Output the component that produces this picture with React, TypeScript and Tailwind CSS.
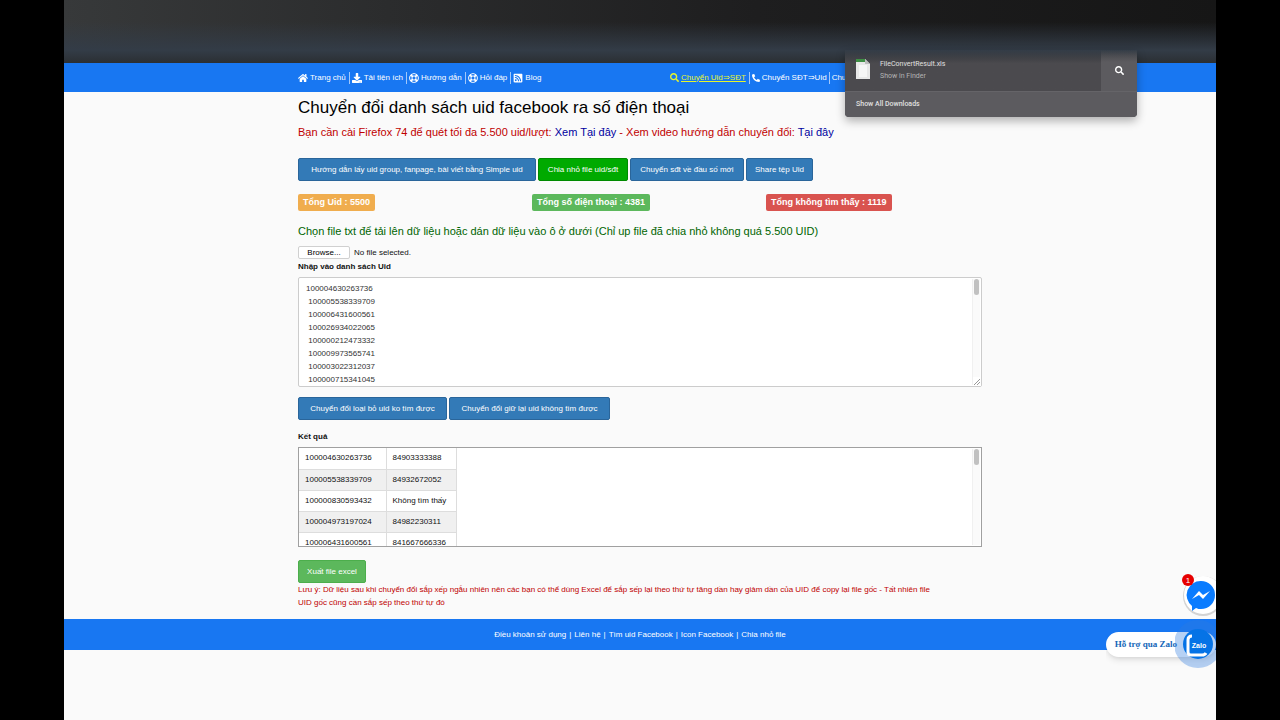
import React, { useState } from 'react';
import { FaDownload, FaHome, FaPhoneAlt, FaRegLifeRing, FaRssSquare, FaSearch } from 'react-icons/fa';
import { clsx } from 'clsx';

const UIDS = [
  '100004630263736',
  ' 100005538339709',
  ' 100006431600561',
  ' 100026934022065',
  ' 100000212473332',
  ' 100009973565741',
  ' 100003022312037',
  ' 100000715341045',
].join('\n');

const RESULTS = [
  { uid: '100004630263736', phone: '84903333388' },
  { uid: '100005538339709', phone: '84932672052' },
  { uid: '100000830593432', phone: 'Không tìm thấy' },
  { uid: '100004973197024', phone: '84982230311' },
  { uid: '100006431600561', phone: '841667666336' },
];

const NAV_LINKS = [
  { label: 'Trang chủ', icon: FaHome },
  { label: 'Tải tiện ích', icon: FaDownload },
  { label: 'Hướng dẫn', icon: FaRegLifeRing },
  { label: 'Hỏi đáp', icon: FaRegLifeRing },
  { label: 'Blog', icon: FaRssSquare },
];

const FOOTER_LINKS = ['Điều khoản sử dụng', 'Liên hệ', 'Tìm uid Facebook', 'Icon Facebook', 'Chia nhỏ file'];

const BUTTON_COLORS = {
  blue: 'bg-[#337ab7] border-[#2a659a]',
  green: 'bg-[#00aa00] border-[#008a00]',
  success: 'bg-[#5cb85c] border-[#4cae4c]',
};

interface ButtonProps {
  color?: keyof typeof BUTTON_COLORS;
  className: string;
  children: React.ReactNode;
}

const Button: React.FC<ButtonProps> = ({ color = 'blue', className, children }) => (
  <button type="button" className={clsx('h-[23px] rounded-xs border text-white whitespace-nowrap', BUTTON_COLORS[color], className)}>
    {children}
  </button>
);

const Badge: React.FC<{ className: string; children: React.ReactNode }> = ({ className, children }) => (
  <span className={clsx('block w-fit h-[17px] px-[5px] rounded-xs text-[9px] leading-[17px] font-bold text-white whitespace-nowrap', className)}>
    {children}
  </span>
);

const ScrollThumb = () => (
  <div className="absolute top-px right-px bottom-px w-2 border-l border-[#f0f0f0] bg-[#fafafa]">
    <div className="ml-px w-[5px] h-4 rounded-full bg-[#c1c1c1]"></div>
  </div>
);

const DownloadsPopup = () => (
  <div className="absolute z-20 top-[50px] right-[79px] w-[292px] rounded-b-sm overflow-hidden bg-linear-to-b from-transparent from-0% to-[#4b4a4e] to-20% text-[#e0e0e0] shadow-[0_4px_10px_rgba(0,0,0,0.3)] font-[Roboto,sans-serif] text-[7px]">
    <div className="flex h-[41px]">
      <div className="flex flex-1 gap-[10px] pl-[11px] pt-2">
        <svg viewBox="0 0 14 21" className="w-[14px] h-[21px]">
          <path d="M0 1h9l5 5v15H0z" fill="#e8e8e8" />
          <path d="M0 1h9v3H0z" fill="#3f8f45" />
          <path d="M9 1l5 5H9z" fill="#bdbdbd" />
          <path d="M3 7h8v12H3z" fill="#f6f6f6" />
        </svg>
        <div className="leading-3">
          <div>FileConvertResult.xls</div>
          <div className="text-[#b4b4b4]">Show in Finder</div>
        </div>
      </div>
      <button type="button" aria-label="Show in Finder" className="flex w-9 items-center justify-center bg-linear-to-b from-transparent to-[#5c5b5f] to-30% text-white">
        <FaSearch size={9} />
      </button>
    </div>
    <div className="h-[26px] px-[11px] bg-[#5c5b5f] border-t border-[#656468] leading-6 font-medium">Show All Downloads</div>
  </div>
);

const ChatWidgets = () => (
  <>
    <button type="button" aria-label="Messenger" className="absolute z-20 top-[574px] right-0 w-[34px] h-11 overflow-hidden">
      <svg viewBox="0 0 34 44" className="w-[34px] h-11">
        <circle cx="21" cy="22" r="20" fill="#b9b9b9" opacity="0.6" />
        <circle cx="21" cy="21" r="19" fill="#fff" />
        <path d="M19 7a14 14 0 0 1 14 14c0 8-6 14-14 14-2 0-3 0-5-1l-4 3v-5a14 14 0 0 1 9-25z" fill="#0a7cff" />
        <path d="M10 25l7-8 4 4 7-4-7 8-4-4z" fill="#fff" />
        <circle cx="6" cy="6" r="6" fill="#e60000" />
        <text x="6" y="9" textAnchor="middle" fontSize="8" fill="#fff">1</text>
      </svg>
    </button>
    <a href="#zalo" className="absolute z-20 top-[617px] right-0 flex h-[54px] items-center overflow-hidden text-[#1466b8]">
      <span className="h-[25px] pl-[9px] pr-[39px] rounded-full bg-white leading-6 text-[9px] font-bold font-[Liberation_Serif,serif] shadow-md">
        Hỗ trợ qua Zalo
      </span>
      <svg viewBox="0 0 41 54" className="-ml-[41px] w-[41px] h-[54px]">
        <circle cx="23" cy="27" r="24" fill="#2f7be0" opacity="0.35" />
        <circle cx="23" cy="27" r="15" fill="#0573e6" />
        <path d="M17 19q-4 0-4 4v12q0 3 3 3h11q3 0 4-2" fill="none" stroke="#fff" strokeWidth="3" />
        <text x="24" y="31" textAnchor="middle" fontSize="7" fontWeight="bold" fill="#fff">Zalo</text>
      </svg>
    </a>
  </>
);

const App: React.FC = () => {
  const [uids, setUids] = useState(UIDS);

  return (
    <div className="min-h-screen px-[5%] bg-black">
      <div className="relative min-h-screen overflow-hidden bg-[#fafafa] font-[Liberation_Sans,Arial,sans-serif] text-[8px] text-[#111]">
        <div className="h-[63px] bg-linear-to-r from-[#37393a] via-[#1e1e1f] via-60% to-[#161616]">
          <div className="h-full bg-linear-to-b from-transparent from-35% via-[#333c47] via-80% to-[#2b2f33]"></div>
        </div>

        <header className="bg-[#1877f2] text-white">
          <nav className="flex justify-between max-w-[684px] h-[29px] mx-auto items-center whitespace-nowrap">
            <div className="flex items-center">
              {NAV_LINKS.map(({ label, icon: Icon }, i) => (
                <a key={label} href="#" className={clsx('flex items-center gap-[2px] pr-[3px]', i > 0 && 'border-l border-white/60 pl-[2px]')}>
                  <Icon size={10} />
                  {label}
                </a>
              ))}
            </div>
            <div className="flex w-[312px] items-center">
              <a href="#" className="flex items-center gap-[2px] pr-[3px] text-[#e6f52c]">
                <FaSearch size={9} />
                <span className="underline">Chuyển Uid⇒SĐT</span>
              </a>
              <a href="#" className="flex items-center gap-[2px] border-l border-white/60 px-[2px]">
                <FaPhoneAlt size={8} />
                Chuyển SĐT⇒Uid
              </a>
              <a href="#" className="border-l border-white/60 pl-[2px]">Chu</a>
            </div>
          </nav>
        </header>

        <main className="max-w-[684px] mx-auto">
          <h1 className="pt-1 text-[17px] leading-6 text-black">Chuyển đổi danh sách uid facebook ra số điện thoại</h1>
          <p className="text-[11px] leading-6 text-[#c00000]">
            Bạn cần cài Firefox 74 để quét tối đa 5.500 uid/lượt: <a href="#" className="text-[#0000a0]">Xem Tại đây</a> - Xem video
            hướng dẫn chuyển đổi: <a href="#" className="text-[#0000a0]">Tại đây</a>
          </p>

          <div className="flex gap-[2px] pt-[14px]">
            <Button className="w-[238px]">Hướng dẫn lấy uid group, fanpage, bài viết bằng Simple uid</Button>
            <Button color="green" className="w-[90px]">Chia nhỏ file uid/sđt</Button>
            <Button className="w-[114px]">Chuyển sđt về đầu số mới</Button>
            <Button className="w-[67px]">Share tệp Uid</Button>
          </div>

          <div className="grid grid-cols-[234px_234px_auto] pt-[13px]">
            <Badge className="bg-[#f0ad4e]">Tổng Uid : 5500</Badge>
            <Badge className="bg-[#5cb85c]">Tổng số điện thoại : 4381</Badge>
            <Badge className="bg-[#d9534f]">Tổng không tìm thấy : 1119</Badge>
          </div>

          <p className="pt-2 text-[11px] leading-6 text-[#006400]">
            Chọn file txt để tải lên dữ liệu hoặc dán dữ liệu vào ô ở dưới (Chỉ up file đã chia nhỏ không quá 5.500 UID)
          </p>
          <div className="flex items-center gap-1 pt-[3px]">
            <button type="button" className="w-[52px] h-[13px] rounded-xs border border-[#d0d0d0] bg-white leading-[11px] text-black">Browse...</button>
            <span>No file selected.</span>
          </div>

          <label htmlFor="uids" className="block leading-4 font-bold">Nhập vào danh sách Uid</label>
          <div className="relative mt-[2px] h-[110px] py-1 rounded-xs border border-[#ccc] bg-white">
            <textarea
              id="uids"
              value={uids}
              onChange={e => setUids(e.target.value)}
              className="block w-full h-full px-[7px] resize-none outline-none overflow-hidden leading-[13px] text-[#333]"
            />
            <ScrollThumb />
            <svg viewBox="0 0 8 9" className="absolute right-0 bottom-0 w-2 h-[9px]">
              <path d="M0 0h8v9H0z" fill="#fff" />
              <path d="M1 8l6-6M4 8l3-3" stroke="#999" strokeWidth="1" />
            </svg>
          </div>

          <div className="flex gap-[2px] pt-[10px]">
            <Button className="w-[149px]">Chuyển đổi loại bỏ uid ko tìm được</Button>
            <Button className="w-[161px]">Chuyển đổi giữ lại uid không tìm được</Button>
          </div>

          <h2 className="pt-[9px] leading-4 font-bold">Kết quả</h2>
          <div className="relative mt-[2px] h-[100px] overflow-hidden border border-[#a0a0a0] bg-white">
            <table className="w-[157px] table-fixed border-collapse text-left">
              <tbody>
                {RESULTS.map(row => (
                  <tr key={row.uid} className="h-[21px] border-b border-[#ddd] even:bg-[#f0f0f0]">
                    <td className="w-[87px] pl-[6px] border-r border-[#ddd]">{row.uid}</td>
                    <td className="w-[70px] pl-[6px] border-r border-[#ddd] whitespace-nowrap">{row.phone}</td>
                  </tr>
                ))}
              </tbody>
            </table>
            <ScrollThumb />
          </div>

          <div className="pt-[13px]">
            <Button color="success" className="w-[68px]">Xuất file excel</Button>
          </div>
          <p className="pb-[10px] leading-[13px] text-[#c00000]">
            Lưu ý: Dữ liệu sau khi chuyển đổi sắp xếp ngẫu nhiên nên các bạn có thể dùng Excel để sắp sếp lại theo thứ tự tăng dần hay
            giảm dần của UID để copy lại file gốc - Tất nhiên file<br />
            UID gốc cũng cần sắp sếp theo thứ tự đó
          </p>
        </main>

        <footer className="flex h-[31px] items-center justify-center bg-[#1877f2] text-white">
          {FOOTER_LINKS.map((label, i) => (
            <React.Fragment key={label}>
              {i > 0 && <span className="px-[3px]">|</span>}
              <a href="#">{label}</a>
            </React.Fragment>
          ))}
        </footer>

        <DownloadsPopup />
        <ChatWidgets />
      </div>
    </div>
  );
};

export default App;
